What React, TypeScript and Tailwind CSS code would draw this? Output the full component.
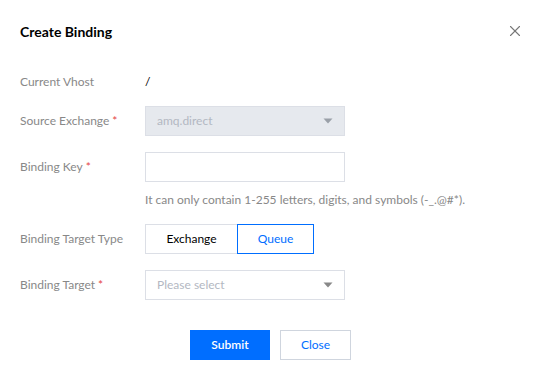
import { X } from "lucide-react";

function Caret({ muted = false }: { muted?: boolean }) {
  return (
    <svg width="10" height="6" viewBox="0 0 10 6" className="shrink-0">
      <path d="M0.5 0.5 L9.5 0.5 L5 5.5 Z" fill={muted ? "#9aa0a8" : "#888888"} />
    </svg>
  );
}

function Label({ text, required = false }: { text: string; required?: boolean }) {
  return (
    <div className="w-[125px] shrink-0 text-[12px] text-[#888888]">
      {text}
      {required && <span className="ml-[3px] text-[#e54545]">*</span>}
    </div>
  );
}

export default function App() {
  return (
    <div
      className="w-[541px] h-[381px] bg-white px-5 text-[12px] text-[#000000]"
      style={{ fontFamily: 'Lato, "Noto Sans", Arial, sans-serif' }}
    >
      <div className="h-[62px] flex items-center justify-between">
        <h2 className="text-[14px] font-bold text-black">Create Binding</h2>
        <X className="w-[18px] h-[18px] text-[#777777] mr-[-3px]" strokeWidth={1.5} />
      </div>

      <div className="pt-[5px] flex flex-col">
        <div className="h-[30px] flex items-center">
          <Label text="Current Vhost" />
          <span className="text-[#000000]">/</span>
        </div>

        <div className="mt-[9px] h-[30px] flex items-center">
          <Label text="Source Exchange" required />
          <div className="w-[200px] h-[30px] bg-[#e6e9ee] border border-[#dcdfe6] flex items-center justify-between pl-[11px] pr-[11px] text-[#b3b8c2]">
            <span>amq.direct</span>
            <Caret muted />
          </div>
        </div>

        <div className="mt-[16px] h-[30px] flex items-center">
          <Label text="Binding Key" required />
          <div className="w-[200px] h-[30px] border border-[#dcdfe6] bg-white" />
        </div>
        <div className="mt-[10px] pl-[125px] h-[16px] leading-[16px] text-[#888888]">
          It can only contain 1-255 letters, digits, and symbols (-_.@#*).
        </div>

        <div className="mt-[16px] h-[30px] flex items-center">
          <Label text="Binding Target Type" />
          <div className="flex h-[30px]">
            <button className="w-[92px] h-[30px] border border-[#dcdfe6] border-r-0 bg-white text-black">
              Exchange
            </button>
            <button className="w-[77px] h-[30px] border border-[#006eff] bg-white text-[#006eff]">
              Queue
            </button>
          </div>
        </div>

        <div className="mt-[16px] h-[30px] flex items-center">
          <Label text="Binding Target" required />
          <div className="w-[200px] h-[30px] border border-[#dcdfe6] bg-white flex items-center justify-between pl-[11px] pr-[11px] text-[#b3b8c2]">
            <span>Please select</span>
            <Caret />
          </div>
        </div>

        <div className="mt-[30px] flex justify-center gap-[10px]">
          <button className="w-[80px] h-[30px] bg-[#006eff] text-white font-semibold">Submit</button>
          <button className="w-[71px] h-[30px] border border-[#cfd5de] bg-white text-[#006eff]">
            Close
          </button>
        </div>
      </div>
    </div>
  );
}
